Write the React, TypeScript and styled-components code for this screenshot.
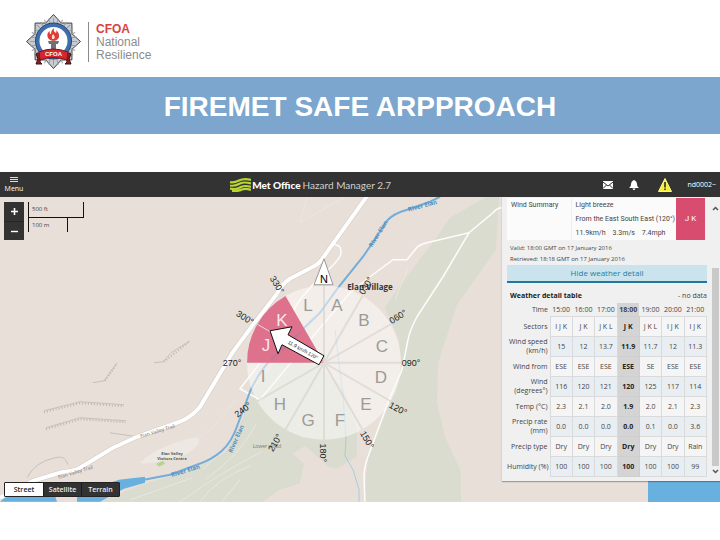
import React from "react";
import styled, { createGlobalStyle, css } from "styled-components";

const GlobalStyle = createGlobalStyle`
  *, *::before, *::after { box-sizing: border-box; }
  body { margin: 0; background: #fff; font-family: "Liberation Sans", Arial, sans-serif; }
  button { font: inherit; border: 0; padding: 0; margin: 0; cursor: pointer; }
`;

const uiFont = css`font-family: "Open Sans", "Noto Sans", sans-serif;`;

const Header = styled.header`
  display: flex;
  align-items: flex-start;
  height: 77px;
  padding: 13px 25px 0;
`;
const Badge = styled.svg`
  width: 57px;
  height: 57px;
  flex: none;
`;
const BrandName = styled.div`
  margin: 9px 0 0 6px;
  padding: 1px 0 0 7px;
  border-left: 1px solid #8a8a8a;
  height: 40px;
  font-size: 12px;
  line-height: 13px;
  color: #8c8c8c;
  strong, span { display: block; }
  strong { color: #d8423f; }
`;
const TitleBar = styled.h1`
  margin: 0 0 38px;
  background: #7ca6cd;
  color: #fff;
  text-align: center;
  font-size: 28px;
  line-height: 57px;
  font-weight: 700;
  padding-top: 1px;
  height: 57px;
`;
const AppBar = styled.nav`
  ${uiFont}
  display: grid;
  grid-template-columns: 7fr auto 10fr;
  align-items: center;
  height: 25px;
  background: #333;
  color: #fff;
`;
const MenuButton = styled.button`
  justify-self: start;
  width: 28px;
  background: none;
  color: #fff;
  font-size: 7px;
  line-height: 9px;
  svg { display: block; margin: 0 auto 2px; }
`;
const Product = styled.div`
  display: flex;
  align-items: center;
  font-family: Lato, "Open Sans", sans-serif;
  font-size: 10px;
  font-weight: 400;
  white-space: nowrap;
  color: #d0d0d0;
  svg { margin-right: 1px; }
  strong { font-weight: 900; color: #fff; margin-right: 2px; }
`;
const Tools = styled.div`
  justify-self: end;
  display: flex;
  align-items: center;
  padding-right: 4px;
`;
const ToolButton = styled.button<{ $gap: number }>`
  background: none;
  color: #fff;
  font-size: 7px;
  line-height: 14px;
  margin-right: ${(p) => p.$gap}px;
  svg { display: block; }
`;

const MapArea = styled.main`
  ${uiFont}
  position: relative;
  display: flex;
  justify-content: space-between;
  align-items: flex-start;
  background: #e8dfd9;
  overflow: hidden;
`;
const MapCanvas = styled.svg`
  position: absolute;
  inset: 0;
  width: 100%;
  height: 100%;
`;
const MapControls = styled.div`
  position: relative;
  align-self: stretch;
  display: flex;
  flex-direction: column;
  justify-content: space-between;
  padding: 5px 0 5px 4px;
`;
const TopControls = styled.div`
  display: flex;
  gap: 4px;
`;
const ZoomGroup = styled.div`
  display: flex;
  flex-direction: column;
  width: 20px;
  height: 38px;
  background: #333;
`;
const ZoomButton = styled.button`
  flex: 1;
  display: grid;
  place-items: center;
  background: #333;
  color: #fff;
  & + & { border-top: 1px solid #262626; }
`;
const Scale = styled.div`
  font-size: 6px;
  line-height: 14px;
  color: #444;
`;
const ScaleBar = styled.div<{ $width: number; $last?: boolean }>`
  width: ${(p) => p.$width}px;
  height: ${(p) => (p.$last ? 14 : 16)}px;
  padding-left: 3px;
  border: solid #111;
  border-width: ${(p) => (p.$last ? "0 1px 0 1px" : "0 1px 1px 1px")};
`;
const LayerSwitch = styled.div`
  display: flex;
  border: 1px solid #222;
  border-radius: 1px;
  height: 15px;
`;
const LayerButton = styled.button<{ $active?: boolean }>`
  width: 38px;
  font-size: 7px;
  line-height: 13px;
  font-weight: 600;
  background: ${(p) => (p.$active ? "#fff" : "#333")};
  color: ${(p) => (p.$active ? "#222" : "#eee")};
  & + & { border-left: 1px solid #1b1b1b; }
`;

const Panel = styled.aside`
  position: relative;
  display: flex;
  width: 218px;
  margin-bottom: 21px;
  background: #f0f0f0;
  color: #444;
  box-shadow: 0 1px 1px rgba(0, 0, 0, 0.3);
`;
const PanelBody = styled.div`
  flex: 1;
  padding: 1px 0 4px 5px;
  font-size: 7px;
`;
const ScrollTrack = styled.div`
  display: flex;
  flex-direction: column;
  align-items: center;
  width: 7px;
  margin: 9px 1px 7px 5px;
`;
const Thumb = styled.div`
  flex: 1;
  width: 7px;
  margin: 57px 0 3px;
  background: #c9c9c9;
`;
const Summary = styled.table`
  border-collapse: collapse;
  table-layout: fixed;
  width: 198px;
  height: 42px;
  font-family: Roboto, "Open Sans", sans-serif;
  line-height: 14px;
  th, td { padding: 0 0 0 4px; text-align: left; vertical-align: top; font-weight: 400; background: #fbfbfb; white-space: nowrap; }
  th { border-right: 1px solid #eee; }
  td div { white-space: pre; }
`;
const AlertCell = styled.td`
  && { background: #d84c70; color: #fff; text-align: center; vertical-align: middle; padding: 0; font-size: 8px; }
`;
const Times = styled.p`
  margin: 3px 0 0 3px;
  font-size: 6px;
  line-height: 11px;
`;
const HideButton = styled.button`
  display: block;
  width: 200px;
  height: 18px;
  background: #cae3ed;
  border-bottom: 2px solid #22789b;
  color: #277ca3;
  font-size: 8px;
  line-height: 16px;
`;
const DetailHead = styled.div`
  display: flex;
  justify-content: space-between;
  width: 200px;
  padding: 8px 0 0 3px;
  font-size: 7px;
  line-height: 10px;
  strong { color: #222; }
`;
const Detail = styled.table`
  border-collapse: collapse;
  table-layout: fixed;
  width: 200px;
  margin-top: 2px;
  font-size: 7px;
  line-height: 9px;
  color: #444;
`;
const Row = styled.tr<{ $head?: boolean; $tint?: boolean }>`
  height: ${(p) => (p.$head ? 13 : 20)}px;
  td { background: ${(p) => (p.$tint ? "#e9eef2" : "#f5f5f5")}; border: 1px solid #d8dadc; }
`;
const RowLabel = styled.th`
  padding: 0 2px 0 0;
  text-align: right;
  font-weight: 400;
`;
const ColHead = styled.th<{ $now?: boolean }>`
  padding: 0;
  text-align: center;
  font-weight: ${(p) => (p.$now ? 700 : 400)};
  background: ${(p) => (p.$now ? "#d4d4d4" : "transparent")};
`;
const Cell = styled.td<{ $now?: boolean }>`
  padding: 0;
  text-align: center;
  ${(p) => p.$now && css`&& { font-weight: 700; background: #d4d4d4; color: #222; border-color: #cfcfcf; }`}
`;

const hours = ["15:00", "16:00", "17:00", "18:00", "19:00", "20:00", "21:00"];
const NOW = 3;
const rows: { label: string; values: string[] }[] = [
  { label: "Sectors", values: ["I J K", "J K", "J K L", "J K", "J K L", "I J K", "I J K"] },
  { label: "Wind speed (km/h)", values: ["15", "12", "13.7", "11.9", "11.7", "12", "11.3"] },
  { label: "Wind from", values: ["ESE", "ESE", "ESE", "ESE", "SE", "ESE", "ESE"] },
  { label: "Wind (degrees°)", values: ["116", "120", "121", "120", "125", "117", "114"] },
  { label: "Temp (°C)", values: ["2.3", "2.1", "2.0", "1.9", "2.0", "2.1", "2.3"] },
  { label: "Precip rate (mm)", values: ["0.0", "0.0", "0.0", "0.0", "0.1", "0.0", "3.6"] },
  { label: "Precip type", values: ["Dry", "Dry", "Dry", "Dry", "Dry", "Dry", "Rain"] },
  { label: "Humidity\u00a0(%)", values: ["100", "100", "100", "100", "100", "100", "99"] },
];

const CX = 324;
const CY = 363;
const R = 77;
const onRim = (deg: number, r = R) => {
  const a = (deg * Math.PI) / 180;
  return `${(CX + r * Math.sin(a)).toFixed(1)} ${(CY - r * Math.cos(a)).toFixed(1)}`;
};

const sectors: [string, number, number][] = [
  ["A", 337, 306], ["B", 364, 321], ["C", 382, 347], ["D", 381, 378], ["E", 366, 405], ["F", 340, 421],
  ["G", 308, 421], ["H", 280, 405], ["I", 263, 377], ["J", 266, 346], ["K", 282, 321], ["L", 308, 306],
];
const bearings: [string, number, number, number][] = [
  ["030°", 366, 286, -60], ["060°", 398, 317, -32], ["090°", 411, 363, 0], ["120°", 398, 409, 28],
  ["150°", 367, 440, 60], ["180°", 323, 453, 90], ["210°", 275, 443, -60], ["240°", 243, 410, -38],
  ["270°", 232, 363, 0], ["300°", 245, 318, 32], ["330°", 277, 285, 58],
];

const MapText = styled.text<{ $size: number; $color: string; $bold?: boolean }>`
  font-family: "Open Sans", "Noto Sans", sans-serif;
  font-size: ${(p) => p.$size}px;
  font-weight: ${(p) => (p.$bold ? 700 : 400)};
  fill: ${(p) => p.$color};
  text-anchor: middle;
`;
const DialText = styled(MapText)`
  font-family: "Liberation Sans", Arial, sans-serif;
  dominant-baseline: central;
`;

function HazardMap() {
  const river =
    "M440 197 430 202 407 210Q393 214 387 221L380 232 363 257 338 288 320 313 300 332 274 356Q258 373 250 392L238 424Q232 442 222 451 212 460 197 465L170 475 144 480";
  const trail =
    "M368 195 323 258Q320 264 311 268L290 279Q281 285 277 294L253 325 233 352 200 407Q192 417 180 422L137 437Q122 444 113 448L80 468Q72 472 63 472L33 481 0 498";
  return (
    <MapCanvas viewBox="0 197 720 305" preserveAspectRatio="xMidYMid slice" role="img" aria-label="Wind map">
      <g fill="#d9dccf">
        <path d="M487 197H499L496 250 457 305 438 363 437 403 445 437 461 472V502H364L368 457 389 405 402 372 399 340 385 308 397 290 437 237 450 218Z" />
        <path d="M300 330 252 392 240 425 225 453 198 468 145 484 100 502H263L280 490 300 484 304 464 293 454 305 446 328 467 337 469 357 457 357 431 343 388 318 366Z" />
      </g>
      <path d="M305 446 328 467 337 469 357 457 357 431 362 440 367 457 364 502H263L280 490 300 484 304 464 293 454Z" fill="#e8dfd9" />
      <g fill="none" stroke="#e9e8df" strokeWidth="1">
        <path d="M243 425 222 452 202 470M256 425Q240 455 205 480M262 452Q225 470 180 502M250 466Q215 480 200 502M240 480 222 502M192 478Q160 490 130 500M235 400Q215 430 190 444" />
        <path d="M307 197 300 223 345 197M408 268 395 300" />
      </g>
      <path d="M68 465Q65 455 55 458 35 462 27 478M137 437 110 433M93 383 104 381 117 363M154 363 163 362 171 353 190 341" fill="none" stroke="#c9c0ba" strokeWidth="1" />
      <path d="M44 411 80 402 124 405M46 428 80 418 126 421" fill="none" stroke="#c9c0ba" strokeWidth="1" />
      <path d="M44 412.500 80 403.500 124 406.500M46 429.500 80 419.500 126 422.500M105 381 117 364M164 362 189 342" fill="none" stroke="#bdb4ae" strokeWidth="2" strokeDasharray="1 2" />
      <path d="M140 463Q150 453 170 445 198 435 199 439 201 446 185 455 150 466 140 463Z" fill="#eee8e3" />
      <path d="M156 464 163 461 165 464 159 467Z" fill="#b5d68e" />
      <g fill="#67b0e0">
        <path d="M119 480 145 477V483L124 489 100 502H77V494Z" />
        <path d="M0 502 7 496H55L57 502Z" />
        <path d="M648 481H760V560H648Z" />
      </g>
      <path d="M340 372 343 395 346 440 345 456 353 470 359 490 359 502M335 330 340 372" fill="none" stroke="#a9cbe0" strokeWidth="1" />
      <path d={trail} fill="none" stroke="#cfc8c3" strokeWidth="5" />
      <path d={trail} fill="none" stroke="#fff" strokeWidth="4" />
      <g fill="none" stroke="#fdfdfb" strokeWidth="1.500">
        <path d="M502 208Q497 208 493 213L469 233 443 277 417 317Q410 330 408 340L402 370 389 400 368 457Q364 468 364 477L365 502" />
        <path d="M469 233 427 243Q418 245 415 250L407 260H393L370 277 350 293 310 340 260 400 240 389 290 325Q292 310 300 300L317 280Q341 260 341 253 341 245 335 245" />
      </g>
      <path d={river} fill="none" stroke="#74add8" strokeWidth="2" />

      <MapText $size={8} $color="#333" $bold x="370" y="290">Elan Village</MapText>
      <MapText $size={6} $color="#4f8fbf" $bold transform="translate(423 208) rotate(-15)">River Elan</MapText>
      <MapText $size={6} $color="#4f8fbf" $bold transform="translate(380 235) rotate(-58)">River Elan</MapText>
      <MapText $size={6} $color="#4f8fbf" $bold transform="translate(238 440) rotate(-66)">River Elan</MapText>
      <MapText $size={6} $color="#4f8fbf" $bold transform="translate(186 473) rotate(-17)">River Elan</MapText>
      <MapText $size={5} $color="#777" transform="translate(158 433) rotate(-17)">Elan Valley Trail</MapText>
      <MapText $size={5} $color="#777" transform="translate(76 474) rotate(-17)">Elan Valley Trail</MapText>
      <MapText $size={4} $color="#555" $bold x="172" y="455">Elan Valley</MapText>
      <MapText $size={4} $color="#555" $bold x="172" y="460">Visitors Centre</MapText>
      <MapText $size={5} $color="#777" x="267" y="448">Lower wood</MapText>

      <circle cx={CX} cy={CY} r={R} fill="#fbfaf7" fillOpacity="0.56" />
      <g stroke="#cfcdc6" strokeWidth="2" opacity="0.5">
        {[0, 30, 60, 90, 120, 150, 180, 210, 240].map((d) => (
          <path key={d} d={`M${CX} ${CY}L${onRim(d)}`} />
        ))}
      </g>
      <path d={`M${CX} ${CY}L${onRim(270)}A${R} ${R} 0 0 1 ${onRim(330)}Z`} fill="#de718c" />
      <path d="M300 333 271 360" stroke="#a77bab" strokeWidth="2" opacity="0.6" />
      <path d={`M${CX} ${CY}L${onRim(300)}`} stroke="#f3d5dc" strokeWidth="1" />
      {sectors.map(([name, x, y]) => (
        <DialText key={name} $size={17} $color={name === "J" || name === "K" ? "#fbe6eb" : "#9b9b98"} x={x} y={y}>{name}</DialText>
      ))}
      {bearings.map(([name, x, y, turn]) => (
        <DialText key={name} $size={9} $color="#1c1c1c" transform={`translate(${x} ${y}) rotate(${turn})`}>{name}</DialText>
      ))}
      <path d="M270 331 292 327 288 335 324 356 319 365 282 345 278 354Z" fill="#fff" stroke="#111" strokeWidth="1" />
      <DialText $size={5} $color="#222" transform="translate(303 350) rotate(29)">11.9 km/h 120°</DialText>
      <path d="M324 259 333 285H314Z" fill="#fff" stroke="#999" strokeWidth="1" />
      <DialText $size={11} $color="#000" x="324" y="279">N</DialText>
    </MapCanvas>
  );
}

function CfoaBadge() {
  const points = Array.from({ length: 16 }, (_, i) => {
    const a = (i * Math.PI) / 8;
    const r = i % 2 ? 20 : i % 4 === 0 ? 27 : 26;
    return `${(28.5 + r * Math.sin(a)).toFixed(1)},${(28.5 - r * Math.cos(a)).toFixed(1)}`;
  }).join(" ");
  return (
    <Badge viewBox="0 0 57 57" role="img" aria-label="CFOA badge">
      <polygon points={points} fill="#c9cdd2" stroke="#3d3f44" strokeWidth="1" strokeLinejoin="round" />
      <g stroke="#9a9fa5" strokeWidth="1">
        {Array.from({ length: 32 }, (_, i) => (
          <path key={i} d="M28.500 11V5" transform={`rotate(${i * 11.25} 28.500 28.500)`} />
        ))}
      </g>
      <circle cx="28.500" cy="28" r="16" fill="#fff" stroke="#3d6fae" strokeWidth="4" />
      <circle cx="28.500" cy="28" r="18" fill="none" stroke="#2a4566" strokeWidth="1" />
      <path d="M23 25Q21 20 25 18 24 21 26 21 26 17 29 15 28 19 31 20 32 19 31 17 36 21 33 26 31 28 28 28 25 28 23 25Z" fill="#df3b34" />
      <path d="M27 26Q26 23 28 21 31 24 29 26Z" fill="#fbd9cf" />
      <path d="M23 28H34L33 31H31V39H26V31H24Z" fill="#6e7278" />
      <path d="M11 41 16 39 15 49 17 51H11L13 46ZM46 41 41 39 42 49 40 51H46L44 46Z" fill="#8f1f24" stroke="#3a1012" strokeWidth="1" />
      <path d="M14 39Q28 33 43 39L42 47Q28 42 15 47Z" fill="#d4262c" stroke="#7c1519" strokeWidth="1" />
      <text x="28.500" y="43" textAnchor="middle" fontFamily="Liberation Sans, Arial, sans-serif" fontSize="6" fontWeight="700" fill="#fff">CFOA</text>
    </Badge>
  );
}

const Chevron = ({ up }: { up?: boolean }) => (
  <svg width="7" height="5" viewBox="0 0 7 5" aria-hidden="true">
    <path d={up ? "M1 4 3.500 1.500 6 4" : "M1 1 3.500 3.500 6 1"} fill="none" stroke="#555" strokeWidth="1.500" />
  </svg>
);

export default function App() {
  return (
    <>
      <GlobalStyle />
      <Header>
        <CfoaBadge />
        <BrandName>
          <strong>CFOA</strong>
          <span>National</span>
          <span>Resilience</span>
        </BrandName>
      </Header>
      <TitleBar>FIREMET SAFE ARPPROACH</TitleBar>
      <AppBar>
        <MenuButton>
          <svg width="8" height="5" viewBox="0 0 8 5" aria-hidden="true">
            <path d="M0 .5H8M0 2.500H8M0 4.500H8" stroke="#ddd" strokeWidth="1" />
          </svg>
          Menu
        </MenuButton>
        <Product>
          <svg width="21" height="14" viewBox="0 0 21 14" aria-hidden="true">
            <g fill="none" stroke="#b9d532" strokeWidth="2.200">
              <path d="M0 4Q4 5 9 2.500 14 0 21 2M0 7.500Q5 8.500 10 5.500 14 3.500 21 5.500M0 10.500Q6 12 11 9 15 7 21 9M2 13Q8 13.500 12 11.500 16 10 21 12" />
            </g>
          </svg>
          <strong>Met Office</strong>Hazard Manager 2.7
        </Product>
        <Tools>
          <ToolButton $gap={16} aria-label="Messages">
            <svg width="10" height="8" viewBox="0 0 10 8">
              <path d="M0 0H10V8H0Z" fill="#fff" />
              <path d="M0 1 5 5 10 1M0 7.500 3.500 4M10 7.500 6.500 4" fill="none" stroke="#333" strokeWidth="1" />
            </svg>
          </ToolButton>
          <ToolButton $gap={19} aria-label="Notifications">
            <svg width="10" height="10" viewBox="0 0 10 10">
              <path d="M5 0Q8 1 8 4.500 8 6.500 10 8H0Q2 6.500 2 4.500 2 1 5 0ZM3.500 8.500H6.500Q6 10 5 10T3.500 8.500Z" fill="#fff" />
            </svg>
          </ToolButton>
          <ToolButton $gap={15} aria-label="Warnings">
            <svg width="14" height="14" viewBox="0 0 14 14">
              <path d="M7 .5 13.500 13.500H.5Z" fill="#f6ee3c" stroke="#fbf78a" strokeWidth="1" strokeLinejoin="round" />
              <path d="M7 4V9.500M7 10.500V12" stroke="#222" strokeWidth="1.500" />
            </svg>
          </ToolButton>
          <ToolButton $gap={0}>nd0002~</ToolButton>
        </Tools>
      </AppBar>
      <MapArea>
        <HazardMap />
        <MapControls>
          <TopControls>
            <ZoomGroup>
              <ZoomButton aria-label="Zoom in">
                <svg width="7" height="7" viewBox="0 0 7 7"><path d="M0 3.500H7M3.500 0V7" stroke="#fff" strokeWidth="1.600" /></svg>
              </ZoomButton>
              <ZoomButton aria-label="Zoom out">
                <svg width="7" height="7" viewBox="0 0 7 7"><path d="M0 4.500H7" stroke="#fff" strokeWidth="1.400" /></svg>
              </ZoomButton>
            </ZoomGroup>
            <Scale>
              <ScaleBar $width={56}>500 ft</ScaleBar>
              <ScaleBar $width={40} $last>100 m</ScaleBar>
            </Scale>
          </TopControls>
          <LayerSwitch>
            <LayerButton $active>Street</LayerButton>
            <LayerButton>Satellite</LayerButton>
            <LayerButton>Terrain</LayerButton>
          </LayerSwitch>
        </MapControls>
        <Panel>
          <PanelBody>
            <Summary>
              <colgroup>
                <col style={{ width: "64px" }} />
                <col />
                <col style={{ width: "29px" }} />
              </colgroup>
              <tbody>
                <tr>
                  <th scope="row">Wind Summary</th>
                  <td>
                    <div>Light breeze</div>
                    <div>From the East South East (120°)</div>
                    <div>{"11.9km/h    3.3m/s    7.4mph"}</div>
                  </td>
                  <AlertCell>J K</AlertCell>
                </tr>
              </tbody>
            </Summary>
            <Times>
              Valid: 18:00 GMT on 17 January 2016
              <br />
              Retrieved: 18:18 GMT on 17 January 2016
            </Times>
            <HideButton>Hide weather detail</HideButton>
            <DetailHead>
              <strong>Weather detail table</strong>
              <span>- no data</span>
            </DetailHead>
            <Detail>
              <colgroup>
                <col style={{ width: "43px" }} />
                {hours.map((h) => <col key={h} />)}
              </colgroup>
              <thead>
                <Row $head>
                  <RowLabel scope="col">Time</RowLabel>
                  {hours.map((h, i) => <ColHead key={h} scope="col" $now={i === NOW}>{h}</ColHead>)}
                </Row>
              </thead>
              <tbody>
                {rows.map((r, n) => (
                  <Row key={r.label} $tint={n % 2 === 1}>
                    <RowLabel scope="row">{r.label}</RowLabel>
                    {r.values.map((v, i) => <Cell key={i} $now={i === NOW}>{v}</Cell>)}
                  </Row>
                ))}
              </tbody>
            </Detail>
          </PanelBody>
          <ScrollTrack>
            <Chevron up />
            <Thumb />
            <Chevron />
          </ScrollTrack>
        </Panel>
      </MapArea>
    </>
  );
}
